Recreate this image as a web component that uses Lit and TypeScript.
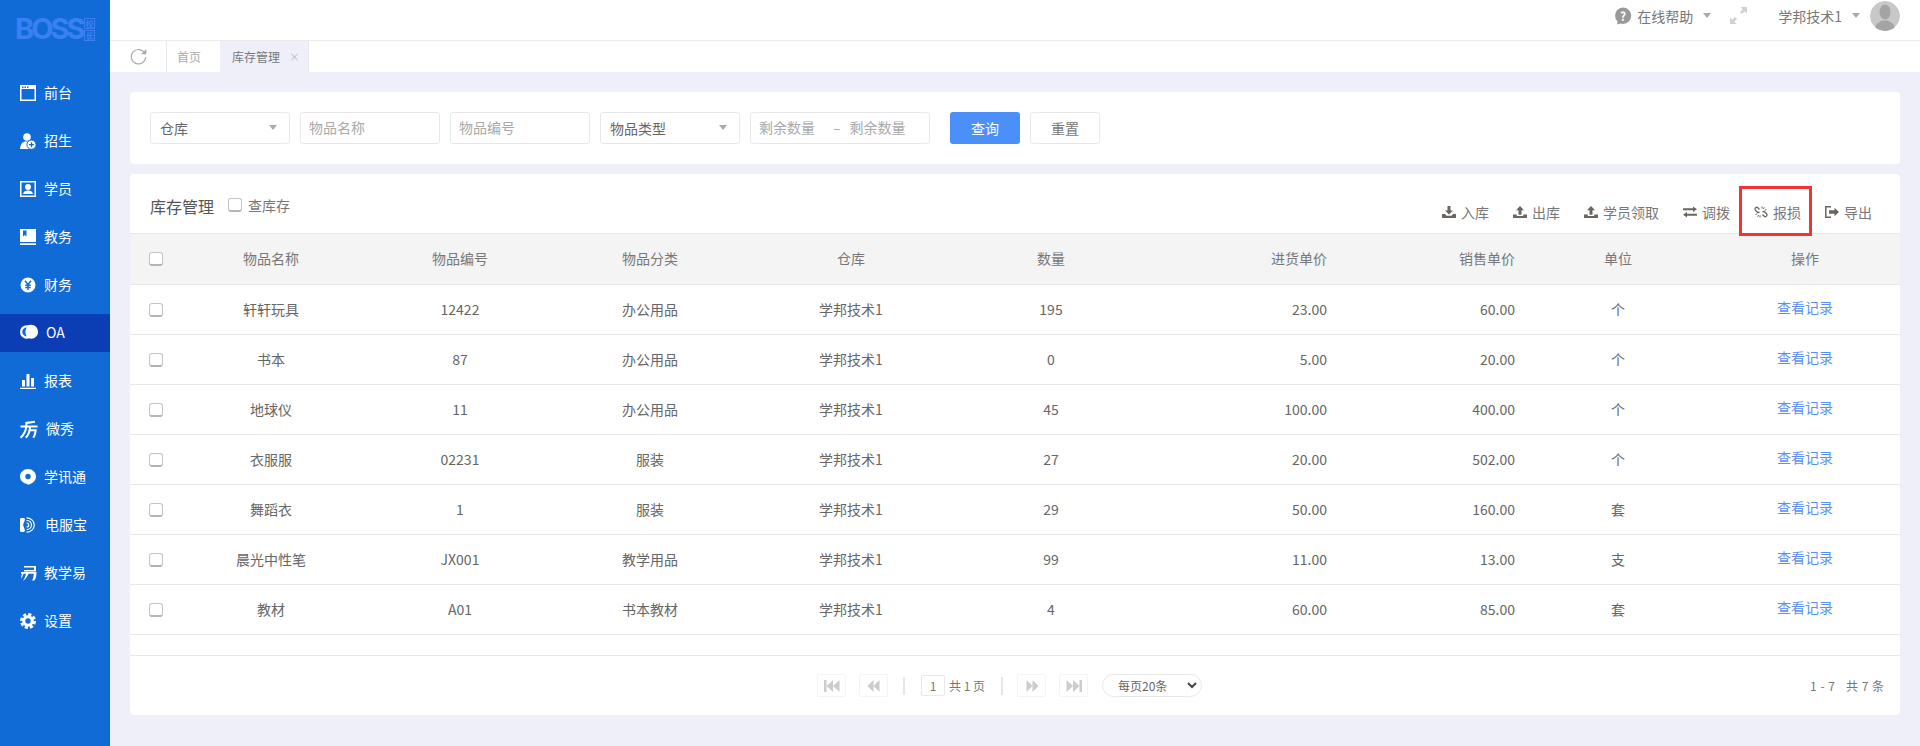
import { LitElement, html, css, svg, unsafeCSS } from "lit";
import { customElement } from "lit/decorators.js";

const FONT = unsafeCSS(`"Noto Sans CJK SC", "Noto Sans", sans-serif`);

const navIcons: Record<string, any> = {
  front: svg`<path fill="#fff" d="M0 0h16v16H0z"/><path fill="#106bd6" d="M1.500 4h13v10.500h-13z"/><path fill="#106bd6" d="M2 1.500h1.500V3H2zM4.500 1.500H6V3H4.500zM7 1.500h1.500V3H7z"/>`,
  enroll: svg`<circle cx="7" cy="4" r="3.800" fill="#fff"/><path fill="#fff" d="M0 16C.5 11 2.500 9 5 8.500h4l.5 7.500z"/><circle cx="11.500" cy="11.700" r="4.600" fill="#fff" stroke="#106bd6"/><path stroke="#106bd6" stroke-width="1.300" d="M9 11.700h5M11.500 9.200v5"/>`,
  student: svg`<path fill="#fff" d="M0 0h16v16H0z"/><path fill="#106bd6" d="M1.500 1.500h13v13h-13z"/><circle cx="8" cy="6" r="3" fill="#fff"/><path fill="#fff" d="M3 13c.4-2.600 2.400-3.600 5-3.600s4.600 1 5 3.600z"/>`,
  edu: svg`<path fill="#fff" d="M0 0h16v13H0zM0 14.200h16V16H0z"/><path fill="#106bd6" d="M3 1.500h3.500v6L4.750 6 3 7.500z"/>`,
  money: svg`<circle cx="8" cy="8" r="7.500" fill="#fff"/><path fill="none" stroke="#106bd6" stroke-width="1.500" d="M5 3.800l3 3.700 3-3.700M8 7.500V13M5.300 8.200h5.400M5.300 10.400h5.400"/>`,
  oa: svg`<circle cx="6" cy="7" r="6" fill="#fff"/><path fill="#106bd6" d="M6 3a4 4 0 1 0 0 8 8 8 0 0 1 0-8z"/><path fill="#fff" d="M6.500 1.700c1-.7 2.300-1 3.500-1 3.300 0 6 2.800 6 6.300 0 3.400-2.700 6-6 6-1.300 0-2.500-.3-3.500-1 1.800-1 3-2.900 3-5.100 0-2.200-1.200-4.200-3-5.200z"/>`,
  report: svg`<path fill="#fff" d="M2 7h3v6.500H2zM6.500 1h3v12.500h-3zM11 5h3v8.500h-3zM0 14.700h16V16H0z"/>`,
  show: svg`<g fill="none" stroke="#fff" stroke-width="1.900"><path d="M5 2L14 .8M.5 5.200H16.500M6 1.500V5c-.5 4.500-2.500 8-5.500 10.800M9.500 5c0 4.500-1.500 8-4 10.800M8 8.800h6.800c-.3 2.700-1 5-2.300 7"/></g>`,
  xun: svg`<path fill="#fff" d="M8 0c4.400 0 8 3.300 8 7.500 0 3.800-3 7-7 8l-1.500.5.300-1C3.400 14.500 0 11.500 0 7.500 0 3.300 3.600 0 8 0z"/><circle cx="8" cy="7.500" r="2.700" fill="#106bd6"/>`,
  phone: svg`<path fill="#fff" d="M.8 1h3.400L5 2.500 4 5.500c-.5.800-.8 1.500-.8 2.500s.3 1.700.8 2.500l1 3L4.200 15H.8L0 14V2z"/><path fill="none" stroke="#fff" stroke-width="1.200" d="M6.500.8c4.200 0 7.800 3.200 7.800 7.200s-3.600 7.200-7.800 7.200M6.500 3.500c2.800 0 5 2 5 4.500s-2.200 4.500-5 4.500M6.500 6c1.200 0 2.200.9 2.200 2s-1 2-2.200 2"/>`,
  easy: svg`<path fill="#fff" d="M4 1h12v5.500H4V5h10V2.500H4z"/><path fill="#fff" d="M1 7h15.500c0 4-1 8-2.500 8.500h-2c1-1.500 1.500-3.500 1.800-6.800H8.500C7 12 5.500 14 3 16c1-2 2.500-4.500 3-7.300H3.500C3 10.500 2 12.500 1 13.500c0-1.500.5-3 1.200-4.800H1z"/>`,
  gear: svg`<circle cx="8" cy="8" r="5.800" fill="#fff"/><circle cx="8" cy="8" r="6.600" fill="none" stroke="#fff" stroke-width="2.800" stroke-dasharray="3.180 2"/><circle cx="8" cy="8" r="2.700" fill="#106bd6"/>`,
};

const nav = [
  ["前台", "front"], ["招生", "enroll"], ["学员", "student"], ["教务", "edu"], ["财务", "money"],
  ["OA", "oa"], ["报表", "report"], ["微秀", "show"], ["学讯通", "xun"], ["电服宝", "phone"],
  ["教学易", "easy"], ["设置", "gear"],
];

const uploadIcon = svg`<path fill="#6b6560" d="M7 0l4 4.300H8.500v4.500h-3V4.300H3zM0 8.500h3.800v1.400h6.400V8.500H14V12H0z"/>`;
const tools: [string, any][] = [
  ["入库", svg`<path fill="#6b6560" d="M5.500 0h3v4.500H11L7 8.500 3 4.500h2.500zM0 8h3l1.500 1.700h5L11 8h3v4H0z"/>`],
  ["出库", uploadIcon],
  ["学员领取", uploadIcon],
  ["调拨", svg`<path fill="#6b6560" d="M0 2.300h10V.5l4 2.700-4 2.700V4.200H0zM14 7.800H4V6.100L0 8.800l4 2.700V9.700h10z"/>`],
  ["报损", svg`<g fill="none" stroke="#6b6560" stroke-width="1.300"><path d="M5.500 3.500L3.800 1.800a1.700 1.700 0 0 0-2.400 2.400L3 5.800c.8.800 1.800.8 2.500.2"/><path d="M8.500 8.500l1.700 1.700a1.700 1.700 0 0 0 2.400-2.400L11 6.200c-.8-.8-1.800-.8-2.500-.2"/><path stroke-width="1" d="M8 .5v2M10.300 1.200L9.500 3M12.500 3.500l-1.800.8M1.500 8.500l1.800-.8M3.700 10.800L4.500 9M6 11.500v-2"/></g>`],
  ["导出", svg`<path fill="none" stroke="#6b6560" stroke-width="1.500" d="M6 .8H.8v10.400H6"/><path fill="#6b6560" d="M4 4.200h5.500V1.800L14 6l-4.500 4.200V7.800H4z"/>`],
];

const rows = [
  ["轩轩玩具", "12422", "办公用品", "195", "23.00", "60.00", "个"],
  ["书本", "87", "办公用品", "0", "5.00", "20.00", "个"],
  ["地球仪", "11", "办公用品", "45", "100.00", "400.00", "个"],
  ["衣服服", "02231", "服装", "27", "20.00", "502.00", "个"],
  ["舞蹈衣", "1", "服装", "29", "50.00", "160.00", "套"],
  ["晨光中性笔", "JX001", "教学用品", "99", "11.00", "13.00", "支"],
  ["教材", "A01", "书本教材", "4", "60.00", "85.00", "套"],
];

const colWidths = [46, 190, 188, 192, 210, 190, 191, 189, 184, 190];

@customElement("app-root")
export class AppRoot extends LitElement {
  static styles = css`
    :host { display: block; width: 1920px; height: 746px; overflow: hidden; font-family: ${FONT}; font-size: 14px; color: #666; background: #eeeff8; }
    * { box-sizing: border-box; }
    .app { display: flex; height: 746px; }
    .side { width: 110px; flex: none; background: #106bd6; color: #fff; }
    .logo { height: 69px; display: flex; align-items: flex-start; padding: 15px 0 0 15px; color: #3a80f2; }
    .logo-word { font: 700 29px/27px Inter, "Liberation Sans", sans-serif; letter-spacing: -3px; width: 69px; white-space: nowrap; }
    .logo-cn { display: flex; flex-direction: column; gap: 1px; margin-top: 3px; }
    .logo-cn span { display: block; width: 11px; height: 11px; border: 1px solid #3a80f2; color: #3a80f2; font-size: 8px; line-height: 9px; text-align: center; font-weight: 700; }
    .nav-item { height: 48px; display: flex; align-items: center; padding-left: 20px; gap: 8px; font-size: 14px; color: #fff; }
    .nav-item span { margin-bottom: 2px; }
    .nav-item svg { width: 16px; height: 16px; flex: none; overflow: visible; }
    .nav-item.active { height: 38px; margin: 5px 0; background: #0b3db4; gap: 8px; }
    .nav-item.active svg { width: 18px; height: 18px; }
    .nav-item.i-show svg { width: 17px; height: 17px; margin-right: 1px; }
    .nav-item.i-phone svg { margin-right: 1px; }
    .main { flex: 1; min-width: 0; display: flex; flex-direction: column; }
    .top { height: 41px; flex: none; background: #fff; border-bottom: 1px solid #eaeaea; display: flex; align-items: center; justify-content: flex-end; padding: 0 20px 9px 0; color: #777; font-size: 14px; }
    .help { display: flex; align-items: center; gap: 5px; }
    .caret { width: 0; height: 0; border-style: solid; border-color: #aaa transparent transparent; border-width: 5px 4.500px 0; flex: none; }
    .help .caret { margin-left: 5px; }
    .expand { margin: 0 31px 0 19px; flex: none; }
    .user { display: flex; align-items: center; }
    .user .caret { margin: 0 10px 0 10px; }
    .avatar { width: 30px; height: 30px; border-radius: 50%; }
    .tabs { height: 31px; background: #fff; display: flex; font-size: 12px; flex: none; }
    .refresh { width: 56px; display: flex; align-items: center; justify-content: center; padding-right: 18px; padding-left: 18px; }
    .tab { display: flex; align-items: center; border-left: 1px solid #eaeaea; padding: 0 10px; color: #aaa; width: 54px; white-space: nowrap; flex: none; }
    .tab.on { background: #eeeff8; color: #777; width: 89px; gap: 11px; padding-left: 12px; border-left: none; border-right: 1px solid #eaeaea; }
    .content { padding: 20px 20px 0; display: flex; flex-direction: column; gap: 10px; }
    .card { background: #fff; border-radius: 4px; }
    .filter { height: 72px; padding: 20px 0 0 20px; display: flex; gap: 10px; align-items: flex-start; }
    .ctl { height: 32px; border: 1px solid #e8e8e8; border-radius: 3px; width: 140px; display: flex; align-items: center; padding: 0 8px 2px; font-size: 14px; color: #aaa; background: #fff; white-space: nowrap; flex: none; }
    .ctl.sel { color: #666; padding: 0 12px 0 9px; justify-content: space-between; }
    .ctl.sel .caret { margin-top: -2px; }
    .ctl.range { width: 180px; }
    .ctl.range i { font-style: normal; margin: 0 9px 0 18px; }
    .btn { height: 32px; width: 70px; border-radius: 3px; display: flex; align-items: center; justify-content: center; font-size: 14px; flex: none; }
    .btn.p { background: #4a90f8; color: #fff; margin-left: 10px; }
    .btn.g { border: 1px solid #e8e8e8; color: #777; }
    .table-card { height: 541px; display: flex; flex-direction: column; }
    .bar { height: 59px; flex: none; display: flex; align-items: flex-start; padding-left: 20px; }
    .title { font-size: 16px; color: #555; margin-top: 22px; line-height: 20px; }
    .chk { display: inline-block; width: 14px; height: 14px; border: 1px solid #c4c4c4; border-bottom: 2px solid #b4b4b4; border-radius: 3px; background: #fff; flex: none; }
    .chk-l { display: flex; align-items: center; gap: 6px; margin: 21px 0 0 14px; line-height: 20px; color: #777; }
    .tools { margin-left: auto; display: flex; padding: 19px 28px 0 0; }
    .tool { display: flex; align-items: center; gap: 5px; height: 38px; color: #777; white-space: nowrap; margin-left: 24px; }
    .tool svg { width: 14px; height: 12px; flex: none; overflow: visible; }
    .tool.mark { position: relative; }
    .tool.mark::after { content: ""; box-sizing: border-box; position: absolute; left: -15px; top: -7px; width: 73px; height: 50px; border: 3px solid #f23333; }
    table { border-collapse: collapse; table-layout: fixed; width: 1770px; font-size: 14px; flex: none; }
    th, td { height: 50px; padding: 0 0 2px; text-align: center; font-weight: 400; color: #666; border-bottom: 1px solid #e8e8e8; }
    thead th { background: #f4f4f5; height: 51px; border-top: 1px solid #e8e8e8; color: #777; }
    tr > .r { text-align: right; padding-right: 10px; }
    tr > .r2 { text-align: right; padding-right: 11px; }
    .link { color: #5a8ff8; position: relative; top: -2px; }
    tr > .cb { text-align: left; padding: 0; }
    .cb .chk { display: block; margin-left: 19px; }
    .spacer { height: 21px; flex: none; border-bottom: 1px solid #e8e8e8; }
    .pager { flex: 1; display: flex; align-items: center; padding-right: 16px; }
    .pgs { display: flex; align-items: center; margin-left: 687px; font-size: 12px; color: #777; }
    .pg { width: 29px; height: 23px; border: 1px solid #f4f4f4; border-radius: 2px; display: flex; align-items: center; justify-content: center; flex: none; }
    .pg svg { width: 16px; height: 12px; }
    .sep { width: 2px; height: 18px; background: #e6e6e6; flex: none; }
    .gap1 { margin-left: 13px; }
    .sep1 { margin: 0 16px 0 15px; }
    .sep2 { margin: 0 14px 0 16px; }
    .num { width: 24px; height: 21px; border: 1px solid #e8e8e8; border-radius: 2px; display: flex; align-items: center; justify-content: center; margin-right: 4px; flex: none; }
    .per { margin-left: 14px; width: 100px; height: 23px; border: 1px solid #e8e8e8; border-radius: 12px; display: flex; align-items: center; padding: 0 4px 0 15px; justify-content: space-between; color: #666; font-size: 12px; flex: none; }
    .total { margin-left: auto; font-size: 12px; color: #777; word-spacing: 1px; }
  `;

  render() {
    return html`<div class="app">
      <aside class="side">
        <div class="logo"><div class="logo-word">BOSS</div><div class="logo-cn"><span>校</span><span>长</span></div></div>
        ${nav.map(([t, k]) => html`<div class="nav-item i-${k} ${t === "OA" ? "active" : ""}"><svg viewBox="0 0 16 16">${navIcons[k]}</svg><span>${t}</span></div>`)}
      </aside>
      <div class="main">
        <header class="top">
          <div class="help">
            <svg width="18" height="18" viewBox="0 0 18 18"><path fill="#999" d="M9 .5a8.200 8.200 0 0 1 0 16.400c-.8 0-1.500-.1-2.200-.3L3 17.500l.6-3A8.200 8.200 0 0 1 9 .5z"/><text x="9" y="13.500" font-size="12" font-weight="700" text-anchor="middle" fill="#fff">?</text></svg>
            <span>在线帮助</span><span class="caret"></span>
          </div>
          <svg class="expand" width="17" height="17" viewBox="0 0 18 18" fill="#d0d0d0"><path d="M18 0v7l-2.500-2.500-3 3-2-2 3-3L11 0zM0 18v-7l2.500 2.500 3-3 2 2-3 3L7 18z"/></svg>
          <div class="user">
            <span>学邦技术1</span><span class="caret"></span>
            <svg class="avatar" viewBox="0 0 30 30"><circle cx="15" cy="15" r="15" fill="#c8c8c8"/><ellipse cx="15" cy="11" rx="5.500" ry="7.500" fill="#a4a4a4"/><path fill="#a4a4a4" d="M5 27c1-5 5-6 7.500-7.500h5C20 21 24 22 25 27a15 15 0 0 1-20 0z"/></svg>
          </div>
        </header>
        <div class="tabs">
          <div class="refresh"><svg width="17" height="17" viewBox="0 0 17 17" fill="none" stroke="#aaa" stroke-width="1.200"><path d="M14.800 5.200A7.200 7.200 0 1 0 15.700 9"/><path fill="#aaa" stroke="none" d="M16.300 1v5.200h-5.200z"/></svg></div>
          <div class="tab">首页</div>
          <div class="tab on"><span>库存管理</span><svg width="8" height="8" viewBox="0 0 8 8" stroke="#aaa" stroke-width="1"><path d="M.5.500l7 7M7.500.500l-7 7"/></svg></div>
        </div>
        <div class="content">
          <section class="card filter">
            <div class="ctl sel"><span>仓库</span><span class="caret"></span></div>
            <div class="ctl">物品名称</div>
            <div class="ctl">物品编号</div>
            <div class="ctl sel"><span>物品类型</span><span class="caret"></span></div>
            <div class="ctl range"><span>剩余数量</span><i>–</i><span>剩余数量</span></div>
            <div class="btn p">查询</div>
            <div class="btn g">重置</div>
          </section>
          <section class="card table-card">
            <div class="bar">
              <div class="title">库存管理</div>
              <label class="chk-l"><span class="chk"></span><span>查库存</span></label>
              <div class="tools">
                ${tools.map(([t, i]) => html`<div class="tool ${t === "报损" ? "mark" : ""}"><svg viewBox="0 0 14 12">${i}</svg><span>${t}</span></div>`)}
              </div>
            </div>
            <table>
              <colgroup>${colWidths.map((w) => html`<col style="width:${w}px" />`)}</colgroup>
              <thead><tr>
                <th class="cb"><span class="chk"></span></th>
                <th>物品名称</th><th>物品编号</th><th>物品分类</th><th>仓库</th><th>数量</th>
                <th class="r">进货单价</th><th class="r2">销售单价</th><th>单位</th><th>操作</th>
              </tr></thead>
              <tbody>
                ${rows.map((r) => html`<tr>
                  <td class="cb"><span class="chk"></span></td>
                  <td>${r[0]}</td><td>${r[1]}</td><td>${r[2]}</td><td>学邦技术1</td><td>${r[3]}</td>
                  <td class="r">${r[4]}</td><td class="r2">${r[5]}</td><td>${r[6]}</td>
                  <td><span class="link">查看记录</span></td>
                </tr>`)}
              </tbody>
            </table>
            <div class="spacer"></div>
            <div class="pager">
              <div class="pgs">
                <div class="pg"><svg viewBox="0 0 16 12" fill="#ccc"><path d="M0 0h2.500v12H0zM9 0v12L2.500 6zM15.500 0v12L9 6z"/></svg></div>
                <div class="pg gap1"><svg viewBox="0 0 16 12" fill="#ccc"><path d="M7.500 0v12L1.500 6zM13.500 0v12L7.500 6z"/></svg></div>
                <div class="sep sep1"></div>
                <div class="num">1</div><span>共 1 页</span>
                <div class="sep sep2"></div>
                <div class="pg"><svg viewBox="0 0 16 12" fill="#ccc"><path d="M2.500 0v12L8.500 6zM8.500 0v12L14.500 6z"/></svg></div>
                <div class="pg gap1"><svg viewBox="0 0 16 12" fill="#ccc"><path d="M.5 0v12L7 6zM7 0v12L13.500 6zM13.500 0H16v12h-2.500z"/></svg></div>
                <div class="per"><span>每页20条</span><svg width="10" height="7" viewBox="0 0 10 7" fill="none" stroke="#444" stroke-width="2"><path d="M1 1l4 4 4-4"/></svg></div>
              </div>
              <div class="total">1 - 7 &nbsp; 共 7 条</div>
            </div>
          </section>
        </div>
      </div>
    </div>`;
  }
}
